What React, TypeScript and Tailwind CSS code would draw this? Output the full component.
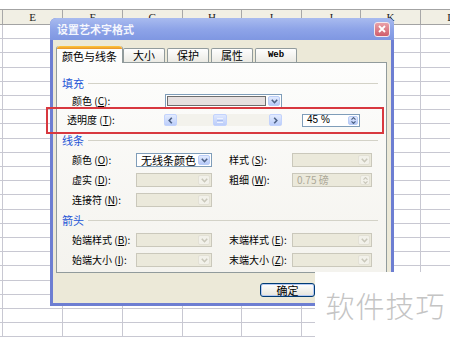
import React from 'react';

const colW = ['w-[3px]', 'w-[60px]', 'w-[60px]', 'w-[60px]', 'w-[59px]', 'w-[60px]', 'w-[59px]', 'w-[60px]', 'w-[60px]'];
const letters = ['', 'E', 'F', 'G', 'H', 'I', 'J', 'K', 'L'];
const rows = Array.from({ length: 22 }, (_, i) => (i % 5 === 2 ? 'h-[15px]' : 'h-[14px]'));

function Chevron({ color }: { color: string }) {
  return (
    <svg width="7" height="5" viewBox="0 0 7 5">
      <path d="M0.8 0.8 L3.5 3.7 L6.2 0.8" fill="none" stroke={color} strokeWidth="1.6" />
    </svg>
  );
}

function DropBtn({ disabled }: { disabled?: boolean }) {
  return (
    <div
      className={
        disabled
          ? 'w-[12px] rounded-[2px] bg-[#f2f1ea] border border-[#e3e1d6] flex items-center justify-center'
          : 'w-[12px] rounded-[2px] bg-gradient-to-b from-[#e3ebfe] to-[#b6c9f7] border border-[#b9ccf6] flex items-center justify-center'
      }
    >
      <Chevron color={disabled ? '#c9c7ba' : '#4d6185'} />
    </div>
  );
}

function Combo({ w, text, disabled }: { w: string; text?: string; disabled?: boolean }) {
  return (
    <div
      className={`${w} h-[14px] flex items-stretch p-px border ${
        disabled ? 'border-[#cac8bb] bg-[#ebe9db]' : 'border-[#7f9db9] bg-white'
      }`}
    >
      <span className="flex-1 flex items-center pl-[3px] text-[11px] leading-none text-black">{text}</span>
      <DropBtn disabled={disabled} />
    </div>
  );
}

function SpinBtn({ disabled }: { disabled?: boolean }) {
  const c = disabled ? '#c9c7ba' : '#4d6185';
  return (
    <div
      className={
        disabled
          ? 'w-[10px] flex flex-col items-center justify-center gap-[1px] rounded-[2px] bg-[#f2f1ea] border border-[#e3e1d6]'
          : 'w-[10px] flex flex-col items-center justify-center gap-[1px] rounded-[2px] bg-gradient-to-b from-[#e3ebfe] to-[#b6c9f7] border border-[#b9ccf6]'
      }
    >
      <svg width="5" height="3" viewBox="0 0 5 3">
        <path d="M0.5 2.6 L2.5 0.6 L4.5 2.6" fill="none" stroke={c} strokeWidth="1.2" />
      </svg>
      <svg width="5" height="3" viewBox="0 0 5 3">
        <path d="M0.5 0.4 L2.5 2.4 L4.5 0.4" fill="none" stroke={c} strokeWidth="1.2" />
      </svg>
    </div>
  );
}

function ScrollBtn({ dir }: { dir: 'l' | 'r' }) {
  return (
    <div className="w-[13px] h-full rounded-[2px] bg-gradient-to-b from-[#e3ebfe] to-[#bccefa] border border-[#c3d3fd] flex items-center justify-center">
      <svg width="5" height="7" viewBox="0 0 5 7">
        <path
          d={dir === 'l' ? 'M3.8 0.7 L1.2 3.5 L3.8 6.3' : 'M1.2 0.7 L3.8 3.5 L1.2 6.3'}
          fill="none"
          stroke="#4d6185"
          strokeWidth="1.6"
        />
      </svg>
    </div>
  );
}

function Label({ t, k, w }: { t: string; k: string; w: string }) {
  return (
    <span className={`${w} text-[10px] leading-none text-black whitespace-nowrap`}>
      {t} (<span className="underline">{k}</span>):
    </span>
  );
}

function Header({ t }: { t: string }) {
  return (
    <div className="h-[20px] flex items-center pl-[5px] pr-[8px]">
      <span className="text-[11px] leading-none text-[#1f56d6]">{t}</span>
      <div className="flex-1 ml-[4px] h-px bg-[#d3d2c7]" />
    </div>
  );
}

function Row2({ l1, k1, l2, k2, f2 }: { l1: string; k1: string; l2: string; k2: string; f2?: React.ReactNode }) {
  return (
    <div className="h-[20px] flex items-center pl-[15px]">
      <Label t={l1} k={k1} w="w-[64px]" />
      <Combo w="w-[76px]" disabled />
      <span className="w-[17px]" />
      <Label t={l2} k={k2} w="w-[63px]" />
      {f2 ?? <Combo w="w-[80px]" disabled />}
    </div>
  );
}

function Tab({ t, active, first, latin }: { t: string; active?: boolean; first?: boolean; latin?: boolean }) {
  if (active) {
    return (
      <div className="relative z-10 -mb-px w-[67px] h-[17px] bg-[#fdfdfc] border-x border-[#919b9c] rounded-t-[3px] flex flex-col">
        <div className="h-[3px] rounded-t-[3px] bg-gradient-to-b from-[#ffc83c] to-[#e6922c]" />
        <div className="flex-1 flex items-center justify-center text-[11px] leading-none text-black">{t}</div>
      </div>
    );
  }
  return (
    <div
      className={`${first ? '' : 'ml-[2px]'} w-[42px] h-[14px] bg-gradient-to-b from-[#fefefe] to-[#ebeae4] border-x border-t border-[#919b9c] rounded-t-[2px] flex items-center justify-center leading-none text-black ${
        latin ? "text-[9px] font-bold font-['Liberation_Mono',monospace]" : 'text-[11px]'
      }`}
    >
      {t}
    </div>
  );
}

export default function App() {
  return (
    <div className="relative w-[450px] h-[339px] overflow-hidden bg-white font-['Noto_Sans_CJK_SC','Noto_Sans',sans-serif]">
      {/* spreadsheet */}
      <div className="pt-[9px]">
        <div className="flex h-[16px] bg-[#f1efe4] border-t border-b border-[#a3a3a3]">
          {colW.map((w, i) => (
            <div
              key={i}
              className={`${w} shrink-0 border-r border-[#a8a8a8] flex items-center justify-center text-[11px] leading-none text-[#222] font-['Liberation_Serif',serif]`}
            >
              {letters[i]}
            </div>
          ))}
        </div>
        {rows.map((h, r) => (
          <div key={r} className={`flex ${h}`}>
            {colW.map((w, i) => (
              <div key={i} className={`${w} shrink-0 border-r border-b border-[#c8c8d2]`} />
            ))}
          </div>
        ))}
      </div>

      {/* dialog window */}
      <div className="absolute left-[50px] top-[18px] w-[344px] h-[288px] flex flex-col rounded-t-[6px] overflow-hidden bg-[#6d7ed2]">
        <div className="h-[22px] shrink-0 flex items-center pl-[7px] pr-[4px] bg-gradient-to-b from-[#a9bbef] via-[#8ea4e8] to-[#7f97e2]">
          <span className="text-[11px] font-bold leading-none text-[#f4f6fd]">设置艺术字格式</span>
          <div className="ml-auto w-[16px] h-[15px] rounded-[3px] border border-[#f3e9ee] bg-gradient-to-b from-[#e9a0a8] to-[#cf5d6c] flex items-center justify-center">
            <svg width="8" height="8" viewBox="0 0 8 8">
              <path d="M1 1 L7 7 M7 1 L1 7" stroke="white" strokeWidth="1.8" />
            </svg>
          </div>
        </div>

        <div className="flex-1 mx-[3px] mb-[3px] bg-[#ece9d8] flex flex-col">
          {/* tabs */}
          <div className="pt-[6px] pl-[3px] h-[22px] flex items-end">
            <Tab t="颜色与线条" active />
            <Tab t="大小" first />
            <Tab t="保护" />
            <Tab t="属性" />
            <Tab t="Web" latin />
          </div>

          {/* panel */}
          <div className="ml-[3px] w-[331px] h-[211px] border border-[#919b9c] bg-gradient-to-b from-[#fdfdfc] to-[#f4f3ee] flex flex-col">
            <div className="h-[11px]" />
            <div className="h-[18px] flex items-center pl-[5px] pr-[8px]">
              <span className="text-[11px] leading-none text-[#1f56d6]">填充</span>
              <div className="flex-1 ml-[4px] h-px bg-[#d3d2c7]" />
            </div>
            <div className="h-[18px] flex items-center pl-[15px]">
              <Label t="颜色" k="C" w="w-[93px]" />
              <div className="w-[117px] h-[14px] flex items-stretch p-px gap-[2px] border border-[#7f9db9] bg-white">
                <div className="flex-1 border border-[#6e6e6e] bg-[#e6dfdf]" />
                <DropBtn />
              </div>
            </div>
            <div className="h-[20px] flex items-center pl-[10px]">
              <Label t="透明度" k="T" w="w-[97px]" />
              <div className="w-[118px] h-[12px] flex bg-[#f3f2ec]">
                <ScrollBtn dir="l" />
                <div className="flex-1 pl-[36px]">
                  <div className="w-[14px] h-full rounded-[2px] bg-gradient-to-b from-[#dfe8fe] to-[#bccdf9] border border-[#c3d3fd] flex flex-col items-center justify-center gap-px">
                    <div className="w-[6px] h-px bg-[#eef2fe]" />
                    <div className="w-[6px] h-px bg-[#a9bdf0]" />
                    <div className="w-[6px] h-px bg-[#eef2fe]" />
                  </div>
                </div>
                <ScrollBtn dir="r" />
              </div>
              <span className="w-[20px]" />
              <div className="w-[58px] h-[13px] flex items-stretch p-px border border-[#7f9db9] bg-white">
                <span className="flex-1 flex items-center pl-[3px] text-[10px] leading-none text-black font-['Liberation_Sans',sans-serif]">
                  45 %
                </span>
                <SpinBtn />
              </div>
            </div>

            <Header t="线条" />
            <div className="h-[20px] flex items-center pl-[15px]">
              <Label t="颜色" k="O" w="w-[64px]" />
              <Combo w="w-[76px]" text="无线条颜色" />
              <span className="w-[17px]" />
              <Label t="样式" k="S" w="w-[63px]" />
              <Combo w="w-[80px]" disabled />
            </div>
            <Row2
              l1="虚实"
              k1="D"
              l2="粗细"
              k2="W"
              f2={
                <div className="w-[80px] h-[14px] flex items-stretch p-px border border-[#cac8bb] bg-[#ebe9db]">
                  <span className="flex-1 flex items-center pl-[3px] text-[10px] leading-none text-[#aca899]">0.75 磅</span>
                  <SpinBtn disabled />
                </div>
              }
            />
            <div className="h-[20px] flex items-center pl-[15px]">
              <Label t="连接符" k="N" w="w-[64px]" />
              <Combo w="w-[76px]" disabled />
            </div>

            <Header t="箭头" />
            <Row2 l1="始端样式" k1="B" l2="末端样式" k2="E" />
            <Row2 l1="始端大小" k1="I" l2="末端大小" k2="Z" />
          </div>

          {/* footer */}
          <div className="flex-1 pt-[10px] pl-[207px] flex items-start">
            <div className="w-[55px] h-[14px] rounded-[3px] border border-[#003c74] bg-gradient-to-b from-[#ffffff] to-[#e7e5dc] shadow-[inset_0_0_0_1px_#b4c8f3] flex items-center justify-center text-[11px] leading-none text-black">
              确定
            </div>
          </div>
        </div>
      </div>

      {/* annotation box */}
      <div className="absolute left-[46px] top-[107px] w-[338px] h-[27px] border-2 border-[#d8383f]" />

      {/* watermark */}
      <div className="absolute left-[315px] top-[272px] w-[135px] h-[67px] bg-white flex items-center justify-center">
        <span className="text-[29px] leading-none font-light text-[#c4c4c4] tracking-[1px] pl-[6px]">软件技巧</span>
      </div>
    </div>
  );
}
